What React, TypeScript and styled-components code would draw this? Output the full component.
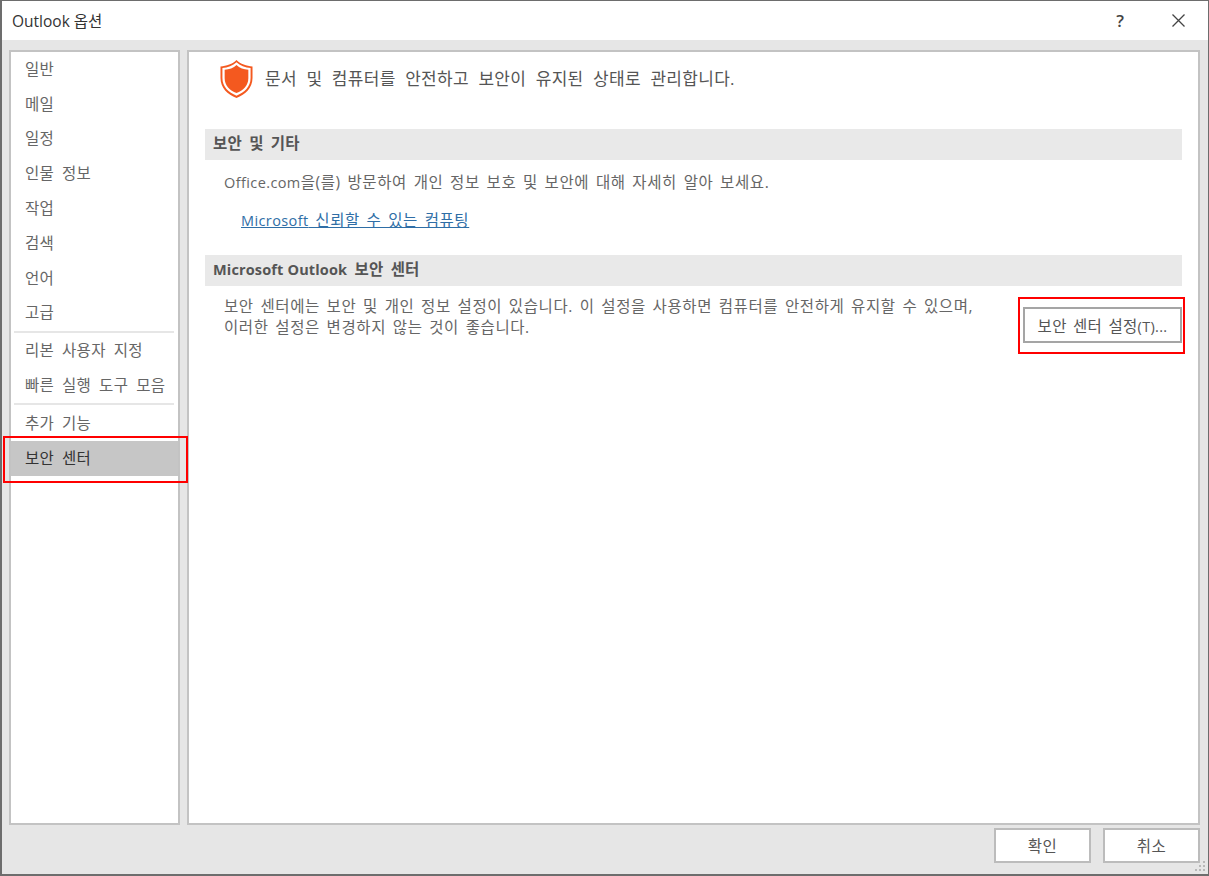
import React from 'react'
import styled, { createGlobalStyle } from 'styled-components'

const Global = createGlobalStyle`
  html, body { margin: 0; padding: 0; background: #e6e6e6; }
  body { font-family: "Open Sans", "Noto Sans CJK KR", sans-serif; }
`

const Win = styled.div`
  position: relative;
  box-sizing: border-box;
  width: 1209px;
  height: 876px;
  display: flex;
  flex-direction: column;
  background: #e6e6e6;
  border: 1px solid #6d6d6d;
  border-left-width: 2px;
  border-bottom-width: 2px;
  overflow: hidden;
`
const TitleBar = styled.div`
  height: 39px;
  flex-shrink: 0;
  background: #fff;
  display: flex;
  align-items: center;
  padding: 0 1px 0 10px;
  color: #333;
  font-size: 15.5px;
`
const TitleText = styled.span`
  flex: 1;
`
const TitleBtn = styled.div`
  width: 58px;
  display: flex;
  justify-content: center;
  align-items: center;
  color: #444;
  font-size: 17px;
  font-weight: 600;
`
const Body = styled.div`
  flex: 1;
  display: flex;
  gap: 7px;
  padding: 10px 8px 0 7px;
`
const Panel = styled.div`
  box-sizing: border-box;
  height: 775px;
  background: #fff;
  border: 2px solid #c3c3c3;
`
const Side = styled(Panel)`
  width: 171px;
  flex-shrink: 0;
`
const SideItem = styled.div<{ $active?: boolean }>`
  box-sizing: border-box;
  height: 34.8px;
  display: flex;
  align-items: center;
  padding: 0 0 2px 14px;
  font-size: 15.5px;
  letter-spacing: 0.3px;
  word-spacing: 3.6px;
  color: ${p => (p.$active ? '#333' : '#666')};
  background: ${p => (p.$active ? '#c6c6c6' : 'transparent')};
`
const SideSep = styled.div`
  height: 2px;
  margin: 0.5px 4px 0.5px 3px;
  background: #e6e6e6;
`
const Main = styled(Panel)`
  flex: 1;
  padding: 0 16px;
`
const Hero = styled.div`
  height: 60px;
  display: flex;
  align-items: flex-start;
  gap: 11px;
  padding: 7px 0 0 14px;
  box-sizing: border-box;
`
const HeroText = styled.div`
  font-size: 17px;
  letter-spacing: 0.3px;
  word-spacing: 4.8px;
  color: #555;
  line-height: 46px;
  margin-top: -3px;
`
const Latin = styled.span`
  font-size: 14.5px;
  letter-spacing: 0.4px;
  word-spacing: 0;
`
const Section = styled.div`
  box-sizing: border-box;
  margin-top: 24px;
  height: 31px;
  background: #e9e9e9;
  display: flex;
  align-items: center;
  padding: 0 0 4px 8px;
  font-size: 15.5px;
  font-weight: 700;
  letter-spacing: 0.2px;
  word-spacing: 3px;
  color: #555;
  white-space: pre;
  ${Latin} {
    letter-spacing: 0.15px;
  }
`
const FirstSection = styled(Section)`
  margin-top: 17px;
`
const Para = styled.div`
  margin: 12px 0 0 19px;
  font-size: 15.5px;
  letter-spacing: 0.6px;
  word-spacing: 2.1px;
  line-height: 20px;
  color: #666;
`
const Lnk = styled.a`
  display: inline-block;
  margin: 17px 0 0 36px;
  font-size: 15.5px;
  letter-spacing: 0.6px;
  word-spacing: 2.1px;
  line-height: 20px;
  color: #2f6ea6;
  text-decoration: underline;
`
const Row = styled.div`
  display: flex;
  justify-content: space-between;
`
const Para2 = styled(Para)`
  margin-top: 10px;
  line-height: 21px;
`
const SettingsBtn = styled.div`
  box-sizing: border-box;
  margin-top: 21px;
  width: 159px;
  height: 36px;
  border: 2px solid #a5a5a5;
  background: #fff;
  display: flex;
  align-items: center;
  justify-content: center;
  font-size: 15.5px;
  color: #555;
  letter-spacing: 0.3px;
  word-spacing: 2px;
  white-space: pre;
  ${Latin} {
    letter-spacing: 0.3px;
  }
`
const Foot = styled.div`
  flex: 1;
  display: flex;
  justify-content: flex-end;
  gap: 12px;
  padding: 3px 8px 0 0;
`
const FootBtn = styled.div`
  box-sizing: border-box;
  width: 97px;
  height: 35px;
  background: #fff;
  border: 2px solid #bcbcbc;
  display: flex;
  align-items: center;
  justify-content: center;
  font-size: 15.5px;
  letter-spacing: 0.5px;
  color: #555;
`
const Mark = styled.div<{ $l: number; $t: number; $w: number; $h: number }>`
  position: absolute;
  box-sizing: border-box;
  left: ${p => p.$l}px;
  top: ${p => p.$t}px;
  width: ${p => p.$w}px;
  height: ${p => p.$h}px;
  border: 2px solid #ff0000;
`
const Grip = styled.svg`
  position: absolute;
  right: 2px;
  bottom: 2px;
`

const items = ['일반', '메일', '일정', '인물 정보', '작업', '검색', '언어', '고급']
const shieldPath = 'M18 1C14 5 8 7 2 7.5V19c0 10 7 16.5 16 20 9-3.5 16-10 16-20V7.5C28 7 22 5 18 1z'

export default function App() {
  return (
    <Win>
      <Global />
      <TitleBar>
        <TitleText>Outlook 옵션</TitleText>
        <TitleBtn>?</TitleBtn>
        <TitleBtn>
          <svg width="13" height="13" viewBox="0 0 13 13">
            <path d="M0.5 0.5l12 12M12.5 0.5l-12 12" stroke="#444" strokeWidth="1.3" fill="none" />
          </svg>
        </TitleBtn>
      </TitleBar>
      <Body>
        <Side>
          {items.map(i => (
            <SideItem key={i}>{i}</SideItem>
          ))}
          <SideSep />
          <SideItem>리본 사용자 지정</SideItem>
          <SideItem>빠른 실행 도구 모음</SideItem>
          <SideSep />
          <SideItem>추가 기능</SideItem>
          <SideItem $active>보안 센터</SideItem>
        </Side>
        <Main>
          <Hero>
            <svg width="35" height="40" viewBox="1 0 34 40">
              <path d={shieldPath} fill="#f4591f" />
              <path d={shieldPath} fill="#fff" transform="translate(18 20) scale(0.88) translate(-18 -20)" />
              <path d={shieldPath} fill="#f4591f" transform="translate(18 20) scale(0.74) translate(-18 -20)" />
            </svg>
            <HeroText>문서 및 컴퓨터를 안전하고 보안이 유지된 상태로 관리합니다.</HeroText>
          </Hero>
          <FirstSection>보안 및 기타</FirstSection>
          <Para>
            <Latin>Office.com</Latin>을(를) 방문하여 개인 정보 보호 및 보안에 대해 자세히 알아 보세요.
          </Para>
          <Lnk>
            <Latin>Microsoft</Latin> 신뢰할 수 있는 컴퓨팅
          </Lnk>
          <Section>
            <span>
              <Latin>Microsoft Outlook</Latin> 보안 센터
            </span>
          </Section>
          <Row>
            <Para2>
              보안 센터에는 보안 및 개인 정보 설정이 있습니다. 이 설정을 사용하면 컴퓨터를 안전하게 유지할 수 있으며,
              <br />
              이러한 설정은 변경하지 않는 것이 좋습니다.
            </Para2>
            <SettingsBtn>
              <span>
                보안 센터 설정<Latin>(T)...</Latin>
              </span>
            </SettingsBtn>
          </Row>
        </Main>
      </Body>
      <Foot>
        <FootBtn>확인</FootBtn>
        <FootBtn>취소</FootBtn>
      </Foot>
      <Mark $l={1} $t={435} $w={185} $h={47} />
      <Mark $l={1016} $t={296} $w={167} $h={57} />
      <Grip width="11" height="11" viewBox="0 0 11 11">
        <path d="M8 0h2v2H8zM4 4h2v2H4zM8 4h2v2H8zM0 8h2v2H0zM4 8h2v2H4zM8 8h2v2H8z" fill="#b8b8b8" />
      </Grip>
    </Win>
  )
}
